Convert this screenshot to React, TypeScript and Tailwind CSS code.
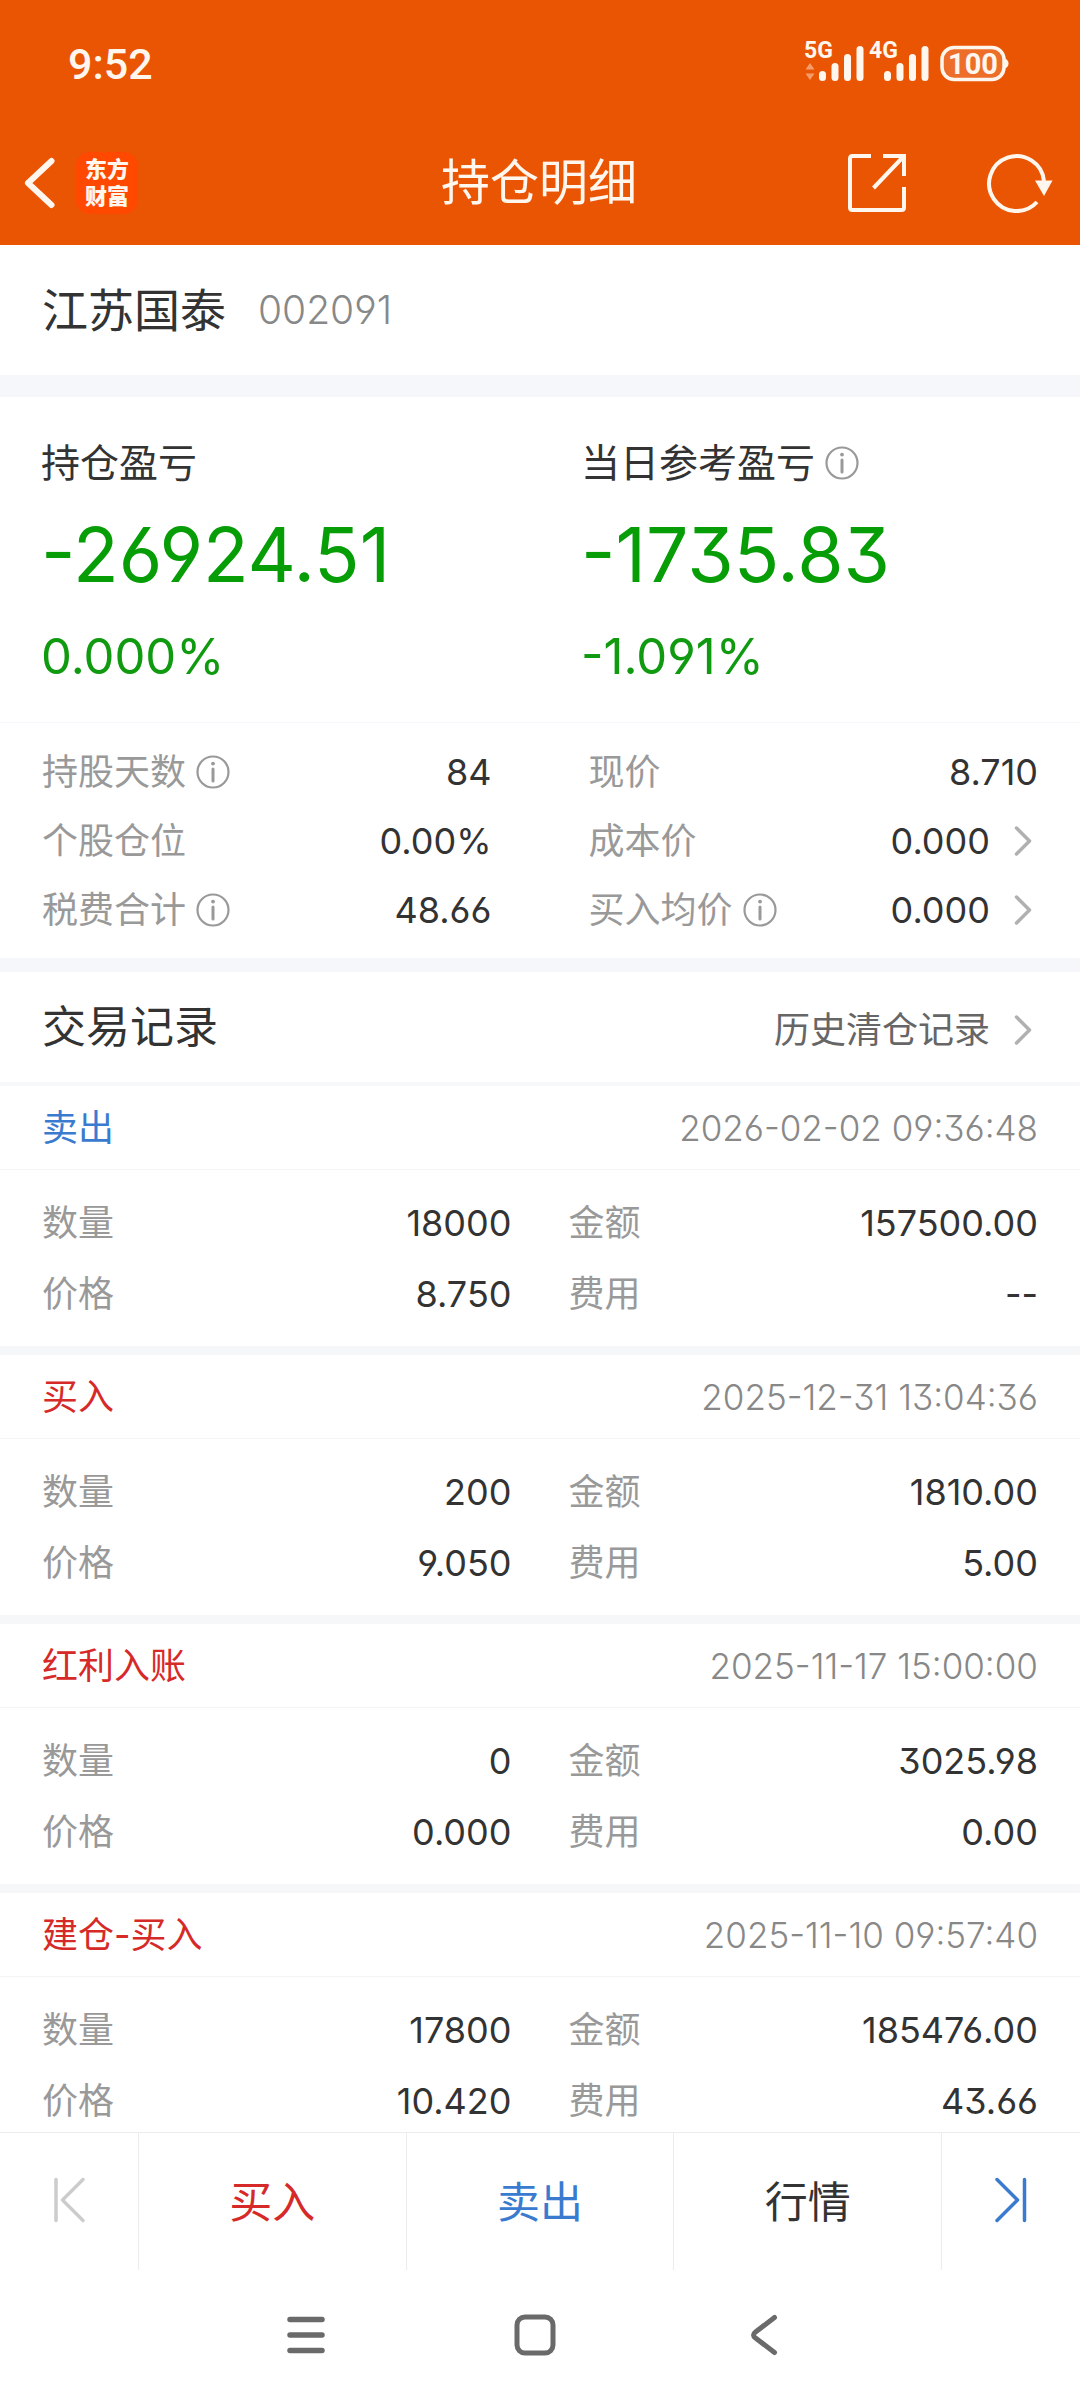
import type { ReactNode } from "react";

interface TradeRecord {
  type: string;
  tone: string;
  time: string;
  quantity: string;
  price: string;
  amount: string;
  fee: string;
}

const BLUE = "text-[#3a7bd0]";
const RED = "text-[#d62a28]";

const records: TradeRecord[] = [
  { type: "卖出", tone: BLUE, time: "2026-02-02 09:36:48", quantity: "18000", price: "8.750", amount: "157500.00", fee: "--" },
  { type: "买入", tone: RED, time: "2025-12-31 13:04:36", quantity: "200", price: "9.050", amount: "1810.00", fee: "5.00" },
  { type: "红利入账", tone: RED, time: "2025-11-17 15:00:00", quantity: "0", price: "0.000", amount: "3025.98", fee: "0.00" },
  { type: "建仓-买入", tone: RED, time: "2025-11-10 09:57:40", quantity: "17800", price: "10.420", amount: "185476.00", fee: "43.66" },
];

function InfoButton({ label }: { label: string }) {
  return (
    <button type="button" aria-label={label} className="ml-2.5 shrink-0 text-[#999999]">
      <svg width="34" height="34" viewBox="0 0 34 34" fill="none" stroke="currentColor">
        <circle cx="17" cy="17" r="15.5" strokeWidth="2.2" />
        <path d="M17 14v12" strokeWidth="3" strokeLinecap="round" />
        <circle cx="17" cy="8.6" r="1.9" fill="currentColor" stroke="none" />
      </svg>
    </button>
  );
}

function Chevron() {
  return (
    <svg className="ml-6 mr-1.5 shrink-0 text-[#b0b0b0]" width="18" height="32" viewBox="0 0 18 32" fill="none" stroke="currentColor">
      <path d="M2.5 3 15.5 16 2.5 29" strokeWidth="3.5" strokeLinecap="round" strokeLinejoin="round" />
    </svg>
  );
}

function SignalIcon({ label, active }: { label: string; active?: boolean }) {
  return (
    <svg width="65" height="60" viewBox="0 -8 65 60" fill="currentColor" className="shrink-0">
      <text x="0" y="16" fontSize="23" fontWeight="700" fontFamily="Roboto, sans-serif">{label}</text>
      {active && <path d="M1.5 27.5 6 21l4.5 6.5zM1.5 31.5h9L6 38z" opacity="0.45" />}
      <rect x="15" y="29" width="7" height="10" rx="3.5" />
      <rect x="27.5" y="21" width="7" height="18" rx="3.5" />
      <rect x="40" y="12" width="7" height="27" rx="3.5" />
      <rect x="52.5" y="4" width="7" height="35" rx="3.5" />
    </svg>
  );
}

function StatusBar() {
  return (
    <div className="flex h-[120px] items-center justify-between pt-2 pl-[68px] pr-[70px]">
      <span className="font-[Roboto] text-[43px] font-medium leading-[56px]">9:52</span>
      <div className="flex items-center">
        <SignalIcon label="5G" active />
        <SignalIcon label="4G" />
        <svg width="70" height="38" viewBox="0 0 70 38" className="ml-1.5 shrink-0">
          <rect x="2" y="2.5" width="62" height="32" rx="12" fill="#fff" fillOpacity="0.15" stroke="currentColor" strokeWidth="3.5" />
          <path d="M65 13.5c2.5 1 3.5 3 3.5 5s-1 4-3.5 5z" fill="currentColor" />
          <text x="33" y="29" textAnchor="middle" fontSize="29" fontWeight="700" fontFamily="Roboto, sans-serif" fill="currentColor">100</text>
        </svg>
      </div>
    </div>
  );
}

function TitleBar() {
  return (
    <div className="grid h-[125px] grid-cols-[1fr_auto_1fr] items-center pl-6 pr-[26px]">
      <div className="flex items-center">
        <button type="button" aria-label="返回">
          <svg width="32" height="52" viewBox="0 0 32 52" fill="none" stroke="currentColor">
            <path d="M27.5 4 4 26 27.5 48" strokeWidth="6" strokeLinecap="round" strokeLinejoin="round" />
          </svg>
        </button>
        <div className="ml-5 flex h-[62px] w-[62px] flex-col items-center justify-center rounded-[14px] bg-[#ff4800] text-[22px] font-black leading-[27px]">
          <span>东方</span>
          <span>财富</span>
        </div>
      </div>
      <h1 className="text-[49px] leading-[64px]">持仓明细</h1>
      <div className="flex items-center justify-end gap-20">
        <button type="button" aria-label="分享">
          <svg width="60" height="60" viewBox="0 0 60 60" fill="none" stroke="currentColor" strokeWidth="4">
            <path d="M24 3H5.5Q3 3 3 5.5v49Q3 57 5.5 57h49q2.5 0 2.5-2.5V34M36 3h21v20M57 3 26.5 35" />
          </svg>
        </button>
        <button type="button" aria-label="刷新">
          <svg width="67" height="60" viewBox="0 0 67 60" fill="none">
            <path d="M57 28A27.5 27.5 0 1 0 50 49" stroke="currentColor" strokeWidth="4" />
            <path d="M48 27.5h17.5L57 43z" fill="currentColor" />
          </svg>
        </button>
      </div>
    </div>
  );
}

interface ProfitProps {
  title: string;
  value: string;
  percent: string;
  info?: boolean;
}

function Profit({ title, value, percent, info }: ProfitProps) {
  return (
    <div className="pl-[41px]">
      <div className="flex h-14 items-center text-[39px] leading-[56px]">
        {title}
        {info && <InfoButton label={title} />}
      </div>
      <div className="mt-4 text-[75px] leading-[96px] text-[#069d06]">{value}</div>
      <div className="mt-6 text-[49px] leading-[60px] text-[#109a10]">{percent}</div>
    </div>
  );
}

interface FieldProps {
  label: string;
  value: string;
  info?: boolean;
  more?: boolean;
}

function Stat({ label, value, info, more }: FieldProps) {
  return (
    <div className="flex h-[69px] items-center justify-between">
      <dt className="flex items-center text-[#999999]">
        {label}
        {info && <InfoButton label={label} />}
      </dt>
      <dd className="flex items-center">
        {value}
        {more && <Chevron />}
      </dd>
    </div>
  );
}

function Field({ label, value }: FieldProps) {
  return (
    <div className="flex h-[71px] items-center justify-between">
      <dt className="text-[#999999]">{label}</dt>
      <dd>{value}</dd>
    </div>
  );
}

function RecordCard({ record }: { record: TradeRecord }) {
  return (
    <article className="border-b-[9px] border-[#f6f7f9]">
      <div className="flex h-[84px] items-center justify-between border-b border-[#f4f4f5] px-[42px]">
        <h3 className={record.tone}>{record.type}</h3>
        <time className="text-[35px] font-light text-[#888888]">{record.time}</time>
      </div>
      <dl className="grid grid-cols-2 gap-x-[57px] px-[42px] py-[17px]">
        <Field label="数量" value={record.quantity} />
        <Field label="金额" value={record.amount} />
        <Field label="价格" value={record.price} />
        <Field label="费用" value={record.fee} />
      </dl>
    </article>
  );
}

function BarButton({ className, children }: { className: string; children: ReactNode }) {
  return (
    <button type="button" className={`flex-1 border-r border-[#ececec] text-[43px] ${className}`}>
      {children}
    </button>
  );
}

export default function App() {
  return (
    <div className="flex h-screen flex-col overflow-hidden bg-white font-[Inter,'Noto_Sans_CJK_SC',sans-serif] text-[36px] leading-[48px] text-[#333333] [font-feature-settings:'cv03','cv04','cv09']">
      <header className="shrink-0 bg-[#ea5504] text-[#fff6ee]">
        <StatusBar />
        <TitleBar />
      </header>

      <main className="min-h-0 flex-1 overflow-hidden">
        <section className="flex h-[130px] items-center gap-8 px-[42px]">
          <h2 className="text-[46px] leading-[60px]">江苏国泰</h2>
          <span className="text-[39px] font-light text-[#888888]">002091</span>
        </section>

        {/* Profit and loss */}
        <section className="grid grid-cols-2 border-y border-t-[22px] border-[#f6f7fa] pt-[38px] pb-[35px]">
          <Profit title="持仓盈亏" value="-26924.51" percent="0.000%" />
          <Profit title="当日参考盈亏" value="-1735.83" percent="-1.091%" info />
        </section>

        <dl className="grid grid-cols-2 gap-x-[97px] px-[42px] py-3.5">
          <Stat label="持股天数" value="84" info />
          <Stat label="现价" value="8.710" />
          <Stat label="个股仓位" value="0.00%" />
          <Stat label="成本价" value="0.000" more />
          <Stat label="税费合计" value="48.66" info />
          <Stat label="买入均价" value="0.000" info more />
        </dl>

        {/* Trade history */}
        <section className="border-t-[14px] border-[#f6f7fa]">
          <div className="flex h-[114px] items-center justify-between border-b-4 border-[#f7f8f9] px-[42px]">
            <h2 className="text-[44px] leading-[60px]">交易记录</h2>
            <a href="#history" className="flex items-center pt-1.5 text-[#666666]">
              历史清仓记录
              <Chevron />
            </a>
          </div>
          {records.map((record) => (
            <RecordCard key={record.time} record={record} />
          ))}
        </section>
      </main>

      <footer className="shrink-0 bg-white">
        <div className="flex h-[138px] border-t border-[#ececec]">
          <button type="button" aria-label="上一只" className="flex w-[139px] shrink-0 items-center justify-center border-r border-[#ececec] pb-1 text-[#cccccc]">
            <svg width="34" height="46" viewBox="0 0 34 46" fill="none" stroke="currentColor" strokeWidth="3.5" strokeLinecap="round" strokeLinejoin="round">
              <path d="M4 2.5v41M31 2.5 10.5 23 31 43.5" />
            </svg>
          </button>
          <BarButton className={RED}>买入</BarButton>
          <BarButton className={BLUE}>卖出</BarButton>
          <BarButton className="text-[#333333]">行情</BarButton>
          <button type="button" aria-label="下一只" className="flex w-[138px] shrink-0 items-center justify-center pb-1 text-[#3a7bd0]">
            <svg width="34" height="46" viewBox="0 0 34 46" fill="none" stroke="currentColor" strokeWidth="3.5" strokeLinecap="round" strokeLinejoin="round">
              <path d="M30.5 2.5v41M3 2.5 23.5 23 3 43.5" />
            </svg>
          </button>
        </div>

        {/* System navigation */}
        <nav className="flex h-[130px] justify-center pr-2.5 text-[#6a6a6a]">
          <button type="button" aria-label="菜单" className="flex w-[229px] items-center justify-center">
            <svg width="40" height="42" viewBox="0 0 40 42" stroke="currentColor" strokeWidth="5.5" strokeLinecap="round">
              <path d="M4 5.5h32M4 21h32M4 36.5h32" />
            </svg>
          </button>
          <button type="button" aria-label="主页" className="flex w-[229px] items-center justify-center">
            <svg width="42" height="42" viewBox="0 0 42 42" fill="none" stroke="currentColor" strokeWidth="5">
              <rect x="3" y="3" width="36" height="36" rx="8" />
            </svg>
          </button>
          <button type="button" aria-label="后退" className="flex w-[229px] items-center justify-center">
            <svg width="28" height="42" viewBox="0 0 28 42" fill="none" stroke="currentColor" strokeWidth="5" strokeLinecap="round">
              <path d="M24.5 3.5 5.5 18q-4 3 0 6L24.5 38.5" />
            </svg>
          </button>
        </nav>
      </footer>
    </div>
  );
}
